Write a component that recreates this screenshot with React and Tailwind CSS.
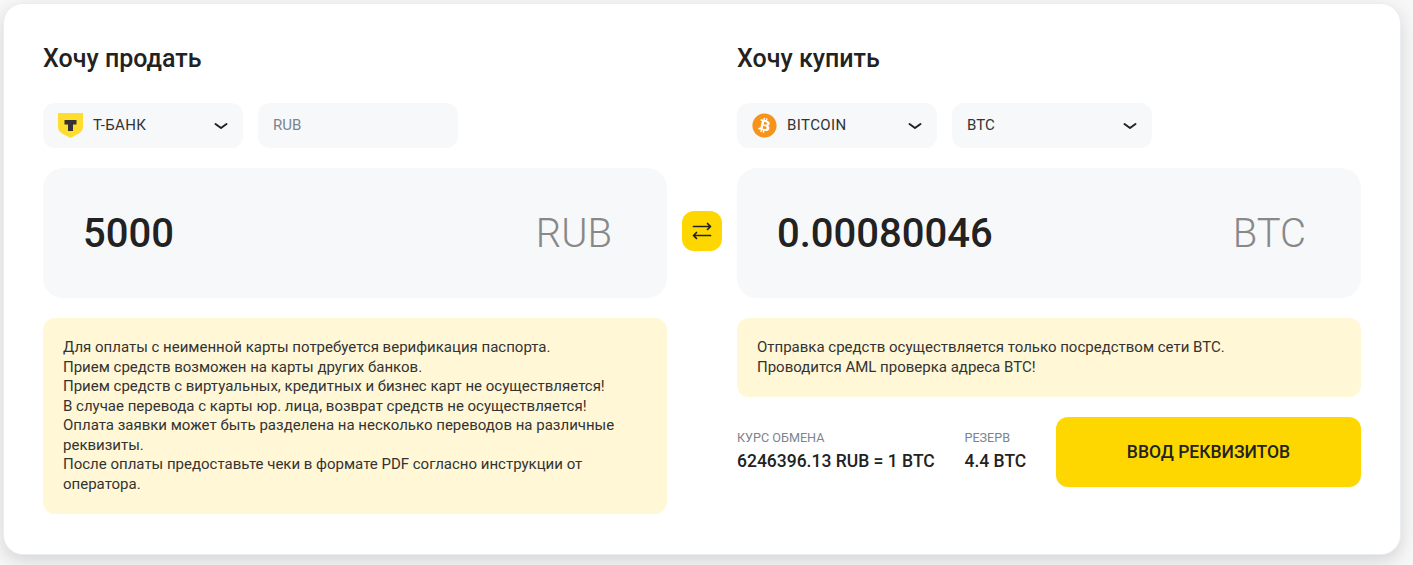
import { FaBitcoin } from 'react-icons/fa';

function Chevron() {
  return (
    <svg className="w-3.5 h-3.5 text-[#222]" viewBox="0 0 14 14" fill="none" stroke="currentColor" strokeWidth={2} strokeLinecap="round" strokeLinejoin="round">
      <path d="M1.500 5l5.500 4 5.500-4" />
    </svg>
  );
}

function SwapIcon() {
  return (
    <svg className="w-5 h-5 text-[#222]" viewBox="0 0 20 20" fill="none" stroke="currentColor" strokeWidth={1.7} strokeLinecap="round" strokeLinejoin="round">
      <path d="M1.500 5.500h17M15.500 2.500l3 3-3 3" />
      <path d="M18.500 14.500h-17M4.500 11.500l-3 3 3 3" />
    </svg>
  );
}

function TbankLogo() {
  return (
    <svg className="w-[25px] h-[25px]" viewBox="0 0 25 25">
      <path d="M0 0h25v13.500c0 3.500-1.900 5.900-4.600 7.300L12.500 25l-7.900-4.200C1.900 19.400 0 17 0 13.500z" fill="#ffdd2d" />
      <path d="M6.500 7h12v4.500h-3.500v6.500h-5v-6.500h-3.500z" fill="#333333" />
    </svg>
  );
}

function BtcLogo() {
  return (
    <span className="relative w-[25px] h-[25px] flex items-center justify-center">
      <span className="absolute inset-[3px] rounded-full bg-white" />
      <FaBitcoin className="relative w-[25px] h-[25px] text-[#f7931a]" />
    </span>
  );
}

function SelectBox({ icon, label, muted }) {
  return (
    <div className="w-[200px] h-[45px] rounded-xl bg-[#f7f8fa] px-[15px] flex items-center">
      {icon && <span className="mr-[10px] flex">{icon}</span>}
      <span className={`flex-1 text-[15px] ${icon ? 'tracking-[0.4px]' : ''} ${muted ? 'text-[#7b8490]' : 'text-[#333]'}`}>{label}</span>
      {!muted && <Chevron />}
    </div>
  );
}

function AmountPanel({ value, currency }) {
  return (
    <div className="h-[130px] mt-5 rounded-[20px] bg-[#f7f8fa] pl-10 pr-[55px] pt-0.5 flex items-center justify-between">
      <span className="text-[40px] font-medium text-[#222]">{value}</span>
      <span className="text-[40px] font-light text-[#888]">{currency}</span>
    </div>
  );
}

export default function App() {
  return (
    <div className="h-[565px] overflow-hidden bg-[#f7f7f7] pl-[3px] pr-3 pt-[3px] font-['Roboto',sans-serif]">
      <div className="h-[552px] rounded-[20px] bg-white border border-[#e9eef5] shadow-[0_6px_18px_rgba(0,0,0,0.14)] px-[39px] pt-[38px] flex">
        <div className="w-[624px]">
          <h2 className="h-[34px] text-[25px] leading-[34px] font-medium text-[#222]">Хочу продать</h2>
          <div className="mt-[27px] flex gap-[15px]">
            <SelectBox icon={<TbankLogo />} label="Т-БАНК" />
            <SelectBox label="RUB" muted />
          </div>
          <AmountPanel value="5000" currency="RUB" />
          <div className="mt-5 rounded-xl bg-[#fff7d6] p-5 text-[15px] leading-[1.3] text-[#333]">
            Для оплаты с неименной карты потребуется верификация паспорта.<br />
            Прием средств возможен на карты других банков.<br />
            Прием средств с виртуальных, кредитных и бизнес карт не осуществляется!<br />
            В случае перевода с карты юр. лица, возврат средств не осуществляется!<br />
            Оплата заявки может быть разделена на несколько переводов на различные реквизиты.<br />
            После оплаты предоставьте чеки в формате PDF согласно инструкции от оператора.
          </div>
        </div>

        <div className="w-[70px] pt-[169px] flex justify-center">
          <button className="w-10 h-10 rounded-xl bg-[#ffd700] flex items-center justify-center">
            <SwapIcon />
          </button>
        </div>

        <div className="w-[624px]">
          <h2 className="h-[34px] text-[25px] leading-[34px] font-medium text-[#222]">Хочу купить</h2>
          <div className="mt-[27px] flex gap-[15px]">
            <SelectBox icon={<BtcLogo />} label="BITCOIN" />
            <SelectBox label="BTC" />
          </div>
          <AmountPanel value="0.00080046" currency="BTC" />
          <div className="mt-5 rounded-xl bg-[#fff7d6] p-5 text-[15px] leading-[1.3] text-[#333]">
            Отправка средств осуществляется только посредством сети BTC.<br />
            Проводится AML проверка адреса BTC!
          </div>
          <div className="mt-5 flex items-center justify-between">
            <div className="pb-0.5">
              <div className="text-[12.6px] text-[#7b8490]">КУРС ОБМЕНА</div>
              <div className="mt-0.5 text-[17.5px] leading-6 font-medium text-[#222]">6246396.13 RUB = 1 BTC</div>
            </div>
            <div className="pb-0.5">
              <div className="text-[12.6px] text-[#7b8490]">РЕЗЕРВ</div>
              <div className="mt-0.5 text-[17.5px] leading-6 font-medium text-[#222]">4.4 BTC</div>
            </div>
            <button className="w-[305px] h-[70px] rounded-xl bg-[#ffd700] text-[17.5px] font-medium text-[#222]">ВВОД РЕКВИЗИТОВ</button>
          </div>
        </div>
      </div>
    </div>
  );
}
